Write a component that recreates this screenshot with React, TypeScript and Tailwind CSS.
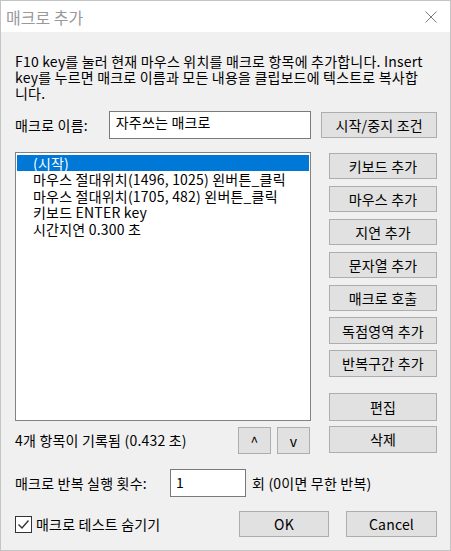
import React from "react";

const font = { fontFamily: '"Noto Sans CJK KR", "Noto Sans", sans-serif', letterSpacing: "0.2px" };

function Btn({ children, className = "" }: { children: React.ReactNode; className?: string }) {
  return (
    <div
      className={
        "flex items-center justify-center bg-[#e1e1e1] border border-[#adadad] text-[14px] text-black leading-none " +
        className
      }
    >
      {children}
    </div>
  );
}

export default function App() {
  const items = [
    "마우스 절대위치(1496, 1025) 왼버튼_클릭",
    "마우스 절대위치(1705, 482) 왼버튼_클릭",
    "키보드 ENTER key",
    "시간지연 0.300 초",
  ];
  const rightButtons = ["키보드 추가", "마우스 추가", "지연 추가", "문자열 추가", "매크로 호출", "독점영역 추가", "반복구간 추가"];
  return (
    <div style={font} className="w-[451px] h-[551px] flex flex-col border border-[#c4c4c4] bg-[#f0f0f0] text-[14px] text-black overflow-hidden">
      {/* title bar */}
      <div className="h-[31px] bg-white flex items-center justify-between pl-[5px] pr-[13px] shrink-0">
        <span className="text-[16px] text-[#999999] leading-none tracking-normal">매크로 추가</span>
        <svg width="12" height="12" viewBox="0 0 12 12">
          <path d="M0.5 0.5 L11.5 11.5 M11.5 0.5 L0.5 11.5" stroke="#7a7a7a" strokeWidth="1" />
        </svg>
      </div>
      {/* body */}
      <div className="flex flex-col pl-[14px] pr-[13px] pt-[21px]">
        <p className="leading-[16px] whitespace-nowrap">
          F10 key를 눌러 현재 마우스 위치를 매크로 항목에 추가합니다. Insert
          <br />
          key를 누르면 매크로 이름과 모든 내용을 클립보드에 텍스트로 복사합
          <br />
          니다.
        </p>
        {/* name row */}
        <div className="flex items-center mt-[10px] h-[28px]">
          <span className="w-[94px]">매크로 이름:</span>
          <div className="w-[203px] h-[28px] bg-white border border-[#7a7a7a] px-[6px] pt-[1px] leading-[18px]">
            자주쓰는 매크로
          </div>
          <Btn className="ml-[10px] w-[116px] h-[26px]">시작/중지 조건</Btn>
        </div>
        {/* main area */}
        <div className="flex mt-[13px]">
          <div className="w-[296px] flex flex-col">
            <div className="h-[269px] bg-white border border-[#828282] pt-[2px] px-[1px] flex flex-col">
              <div className="h-[16.4px] bg-[#0078d7] text-white pl-[16px] leading-[16px]">(시작)</div>
              {items.map((t) => (
                <div key={t} className="h-[16.4px] pl-[16px] leading-[16px] whitespace-nowrap">
                  {t}
                </div>
              ))}
            </div>
            <div className="flex items-center mt-[6px]">
              <span className="w-[223px]">4개 항목이 기록됨 (0.432 초)</span>
              <Btn className="w-[33px] h-[27px]">^</Btn>
              <Btn className="ml-[6px] w-[33px] h-[27px]">v</Btn>
            </div>
          </div>
          <div className="ml-[18px] w-[108px] flex flex-col pt-[1px]">
            <div className="flex flex-col gap-[6.6px]">
              {rightButtons.map((t) => (
                <Btn key={t} className="h-[26.3px]">
                  {t}
                </Btn>
              ))}
            </div>
            <Btn className="mt-[16px] h-[28px]">편집</Btn>
            <Btn className="mt-[5px] h-[27px]">삭제</Btn>
          </div>
        </div>
        {/* repeat row */}
        <div className="flex items-center mt-[15px] h-[28px]">
          <span className="w-[155px]">매크로 반복 실행 횟수:</span>
          <div className="w-[76px] h-[28px] bg-white border border-[#7a7a7a] px-[5px] leading-[24px]">1</div>
          <span className="ml-[6px]">회 (0이면 무한 반복)</span>
        </div>
        {/* bottom row */}
        <div className="flex items-center mt-[14px] h-[26px]">
          <div className="w-[17px] h-[17px] border border-[#333333] bg-white flex items-center justify-center">
            <svg width="13" height="13" viewBox="0 0 13 13">
              <path d="M1.5 6.5 L5 10 L11.5 2.5" stroke="#333333" strokeWidth="1.4" fill="none" />
            </svg>
          </div>
          <span className="ml-[4px] w-[203px]">매크로 테스트 숨기기</span>
          <Btn className="w-[90px] h-[26px]">OK</Btn>
          <Btn className="ml-[17px] w-[91px] h-[26px]">Cancel</Btn>
        </div>
      </div>
    </div>
  );
}
